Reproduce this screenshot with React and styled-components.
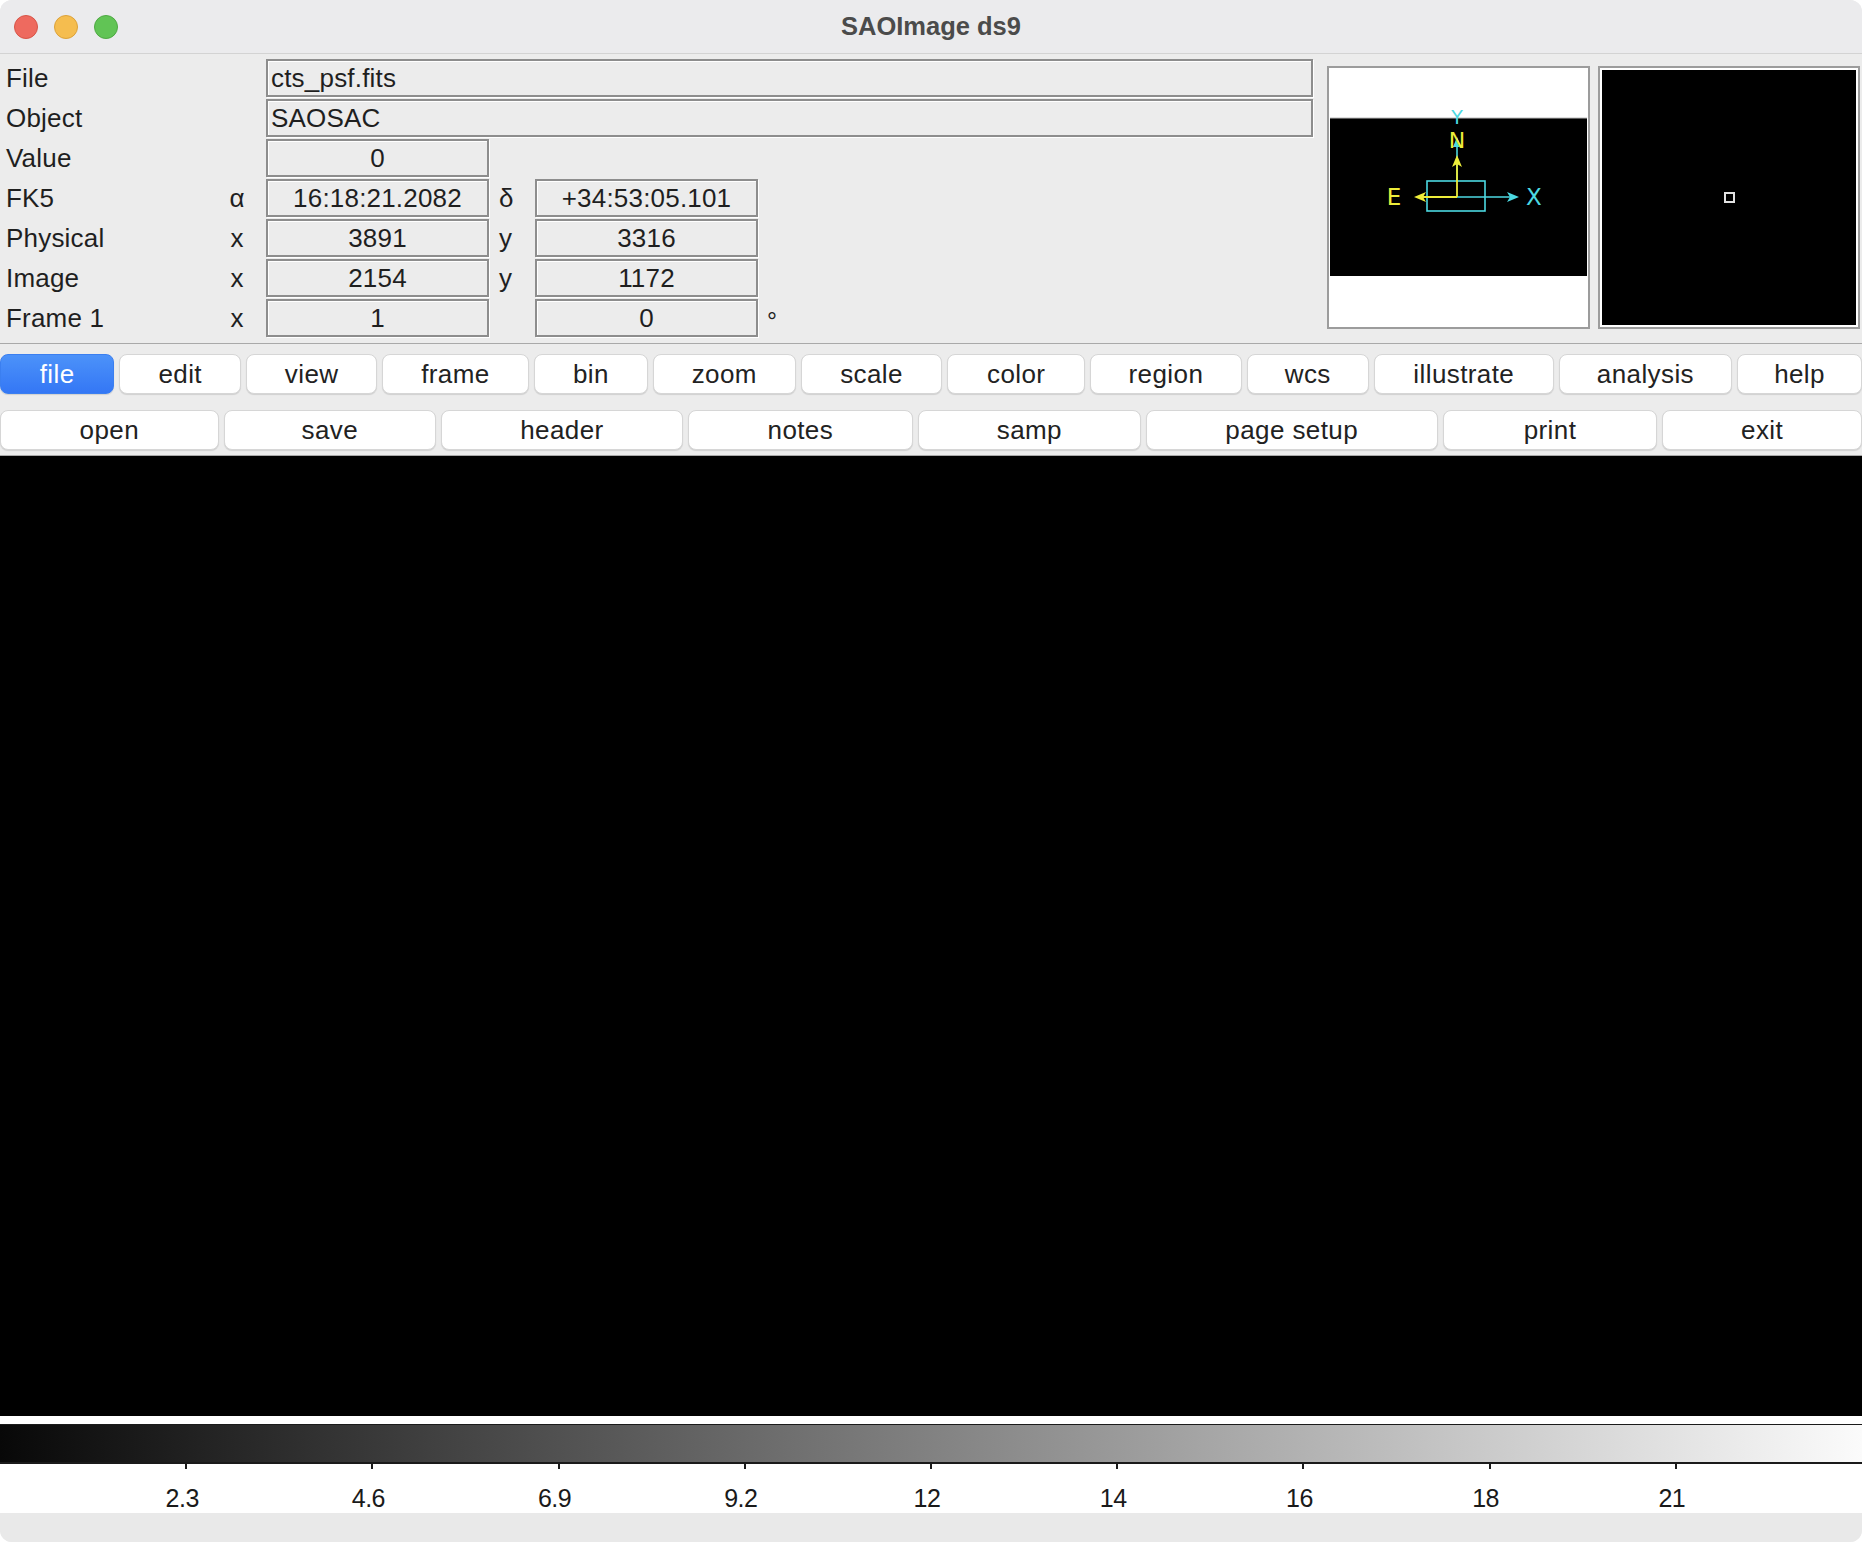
import styled, { createGlobalStyle } from "styled-components"

const GlobalStyle = createGlobalStyle`
    html, body {
        margin: 0;
        padding: 0;
        background: #ffffff;
    }
    * { box-sizing: border-box; }
`

    const Window = styled.div`
        width: 1862px;
        height: 1542px;
        background: #ececec;
        border-radius: 12px;
        overflow: hidden;
        display: flex;
        flex-direction: column;
        font-family: "Liberation Sans", Arial, sans-serif;
        color: #1f1f1f;
    `
    const TitleBar = styled.div`
        height: 54px;
        flex: none;
        display: flex;
        align-items: center;
        background: #ebebed;
        border-bottom: 1px solid #d3d3d3;
        padding-left: 14px;
        position: relative;
    `
    const Light = styled.span`
        width: 24px;
        height: 24px;
        border-radius: 50%;
        margin-right: 16px;
        background: ${(props)=>props.color};
        border: 1px solid ${(props)=>props.edge};
    `
    const Title = styled.div`
        position: absolute;
        left: 0;
        right: 0;
        text-align: center;
        font-weight: bold;
        font-size: 25.5px;
        color: #4b4b4b;
        pointer-events: none;
    `
    const InfoArea = styled.div`
        height: 290px;
        flex: none;
        display: flex;
        border-bottom: 1px solid #a9a9a9;
    `
    const InfoGrid = styled.div`
        width: 1313px;
        padding-top: 5px;
        display: grid;
        grid-template-columns: 220px 46px 223px 46px 223px 1fr;
        grid-auto-rows: 38px;
        row-gap: 2px;
        font-size: 26px;
    `
    const Label = styled.div`
        grid-column: 1;
        padding-left: 6px;
        display: flex;
        align-items: center;
        letter-spacing: 0.2px;
    `
    const Sym = styled.div`
        display: flex;
        align-items: center;
        justify-content: ${(props)=>props.left ? "flex-start" : "center"};
        padding: ${(props)=>props.left ? "0 0 0 10px" : "0 12px 0 0"};
    `
    const Entry = styled.div`
        grid-column: ${(props)=>props.wide ? "3 / 7" : "auto"};
        border: 2px solid #8d8d8d;
        box-shadow: inset 1px 1px 0 #ffffff, 1px 1px 0 #ffffff;
        background: #ececec;
        display: flex;
        align-items: center;
        justify-content: ${(props)=>props.wide ? "flex-start" : "center"};
        padding-left: ${(props)=>props.wide ? "3px" : "0"};
        letter-spacing: 0.2px;
        white-space: nowrap;
    `
    const Degree = styled.div`
        padding: 7px 0 0 9px;
        font-size: 25px;
        line-height: 30px;
    `
    const Blank = styled.div``
    const Frame = styled.div`
        margin-top: 12px;
        margin-left: ${(props)=>props.gap}px;
        width: ${(props)=>props.size}px;
        height: 263px;
        border: 2px solid #9c9c9c;
        padding: 1px;
        background: #ffffff;
    `
    const PanView = styled.div`
        width: 100%;
        height: 100%;
        background: #ffffff;
        display: flex;
        flex-direction: column;
        justify-content: center;
    `
    const MagView = styled.div`
        width: 100%;
        height: 100%;
        background: #000000;
        border: 1px solid #ffffff;
        display: flex;
        align-items: center;
        justify-content: center;
    `
    const MagMark = styled.div`
        width: 11px;
        height: 11px;
        border: 2px solid #e2e2e2;
        margin-left: 1px;
    `
    const ButtonArea = styled.div`
        flex: none;
        padding: 10px 0 5px;
        display: flex;
        flex-direction: column;
        gap: 16px;
        border-bottom: 1px solid #a9a9a9;
    `
    const ButtonRow = styled.div`
        display: flex;
        gap: 5px;
        height: 40px;
    `
    const Button = styled.div`
        flex: ${(props)=>props.w} 1 0;
        min-width: 0;
        border-radius: 8px;
        display: flex;
        align-items: center;
        justify-content: center;
        font-size: 26px;
        letter-spacing: 0.4px;
        color: ${(props)=>props.active ? "#ffffff" : "#222222"};
        background: ${(props)=>props.active ? "linear-gradient(#4c92f9, #3477f5)" : "#ffffff"};
        border: 1px solid ${(props)=>props.active ? "#3b7ff0" : "#d6d6d6"};
        box-shadow: 0 1px 1px rgba(0,0,0,0.12);
    `
    const Canvas = styled.div`
        flex: 1;
        background: #000000;
    `
    const BarGap = styled.div`
        height: 8px;
        background: #ffffff;
        flex: none;
    `
    const Gradient = styled.div`
        height: 40px;
        flex: none;
        border-top: 1px solid #1a1a1a;
        border-bottom: 2px solid #1a1a1a;
        background: linear-gradient(to right, #080808, #fbfbfb);
    `
    const TickRow = styled.div`
        height: 49px;
        flex: none;
        background: #ffffff;
        display: grid;
        grid-template-columns: repeat(10, 1fr);
    `
    const Tick = styled.div`
        grid-column: ${(props)=>props.col};
        display: flex;
        flex-direction: column;
        align-items: flex-start;
    `
    const Mark = styled.div`
        width: 2px;
        height: 5px;
        margin-left: -1px;
        background: #1a1a1a;
    `
    const TickLabel = styled.div`
        margin-top: 16px;
        margin-left: -4px;
        font-size: 25px;
        line-height: 26px;
        transform: translateX(-50%);
        letter-spacing: -0.5px;
        color: #1a1a1a;
    `
    const Footer = styled.div`
        height: 29px;
        flex: none;
        background: #e9e9e9;
    `

const menus = [
    ["file", 114], ["edit", 122], ["view", 131], ["frame", 147], ["bin", 114],
    ["zoom", 143], ["scale", 142], ["color", 138], ["region", 152], ["wcs", 122],
    ["illustrate", 181], ["analysis", 174], ["help", 125],
]
const fileItems = [
    ["open", 218], ["save", 212], ["header", 241], ["notes", 225],
    ["samp", 222], ["page setup", 292], ["print", 214], ["exit", 199],
]
const ticks = ["2.3", "4.6", "6.9", "9.2", "12", "14", "16", "18", "21"]

function Compass () {
    const yel = "#eded3a"
    const cy = "#4cd9e2"
    return (
        <svg width="257" height="257" viewBox="0 0 257 257">
            <rect x="0" y="49" width="257" height="158" fill="#000" />
            <line x1="0" y1="49" x2="257" y2="49" stroke="#bbb" strokeWidth="1" />
            <rect x="97" y="112" width="58" height="30" fill="none" stroke={cy} strokeWidth="1.6" />
            <line x1="127" y1="112" x2="127" y2="76" stroke={cy} strokeWidth="1.6" />
            <polygon points="127,68 123,78 131,78" fill={cy} />
            <line x1="127" y1="128" x2="180" y2="128" stroke={cy} strokeWidth="1.6" />
            <polygon points="189,128 177,123 180,128 177,133" fill={cy} />
            <line x1="127" y1="128" x2="127" y2="94" stroke={yel} strokeWidth="1.8" />
            <polygon points="127,86 122,98 127,95 132,98" fill={yel} />
            <line x1="127" y1="128" x2="92" y2="128" stroke={yel} strokeWidth="1.8" />
            <polygon points="84,128 96,123 93,128 96,133" fill={yel} />
            <text x="64" y="136" fill={yel} fontSize="23" fontFamily="DejaVu Sans, sans-serif" textAnchor="middle">E</text>
            <text x="127" y="79" fill={yel} fontSize="22" fontFamily="DejaVu Sans, sans-serif" textAnchor="middle">N</text>
            <text x="127" y="55" fill={cy} fontSize="19" fontFamily="DejaVu Sans, sans-serif" textAnchor="middle">Y</text>
            <text x="204" y="136" fill={cy} fontSize="23" fontFamily="DejaVu Sans, sans-serif" textAnchor="middle">X</text>
        </svg>
    )
}

function App () {
    return (
        <>
            <GlobalStyle />
            <Window>
                <TitleBar>
                    <Light color="#ee6a5f" edge="#d85548" />
                    <Light color="#f5bd4f" edge="#dca23a" />
                    <Light color="#61c455" edge="#4ea943" />
                    <Title>SAOImage ds9</Title>
                </TitleBar>

                <InfoArea>
                    <InfoGrid>
                        <Label>File</Label>
                        <Blank />
                        <Entry wide>cts_psf.fits</Entry>

                        <Label>Object</Label>
                        <Blank />
                        <Entry wide>SAOSAC</Entry>

                        <Label>Value</Label>
                        <Blank />
                        <Entry>0</Entry>
                        <Blank />
                        <Blank />
                        <Blank />

                        <Label>FK5</Label>
                        <Sym>α</Sym>
                        <Entry>16:18:21.2082</Entry>
                        <Sym left>δ</Sym>
                        <Entry>+34:53:05.101</Entry>
                        <Blank />

                        <Label>Physical</Label>
                        <Sym>x</Sym>
                        <Entry>3891</Entry>
                        <Sym left>y</Sym>
                        <Entry>3316</Entry>
                        <Blank />

                        <Label>Image</Label>
                        <Sym>x</Sym>
                        <Entry>2154</Entry>
                        <Sym left>y</Sym>
                        <Entry>1172</Entry>
                        <Blank />

                        <Label>Frame 1</Label>
                        <Sym>x</Sym>
                        <Entry>1</Entry>
                        <Blank />
                        <Entry>0</Entry>
                        <Degree>°</Degree>
                    </InfoGrid>

                    <Frame gap={14} size={263}>
                        <PanView>
                            <Compass />
                        </PanView>
                    </Frame>
                    <Frame gap={8} size={262}>
                        <MagView>
                            <MagMark />
                        </MagView>
                    </Frame>
                </InfoArea>

                <ButtonArea>
                    <ButtonRow>
                        {menus.map(([name, w]) => (
                            <Button key={name} w={w} active={name === "file"}>{name}</Button>
                        ))}
                    </ButtonRow>
                    <ButtonRow>
                        {fileItems.map(([name, w]) => (
                            <Button key={name} w={w}>{name}</Button>
                        ))}
                    </ButtonRow>
                </ButtonArea>

                <Canvas />

                <BarGap />
                <Gradient />
                <TickRow>
                    {ticks.map((t, i) => (
                        <Tick key={t} col={i + 2}>
                            <Mark />
                            <TickLabel>{t}</TickLabel>
                        </Tick>
                    ))}
                </TickRow>
                <Footer />
            </Window>
        </>
    )
}

export default App
